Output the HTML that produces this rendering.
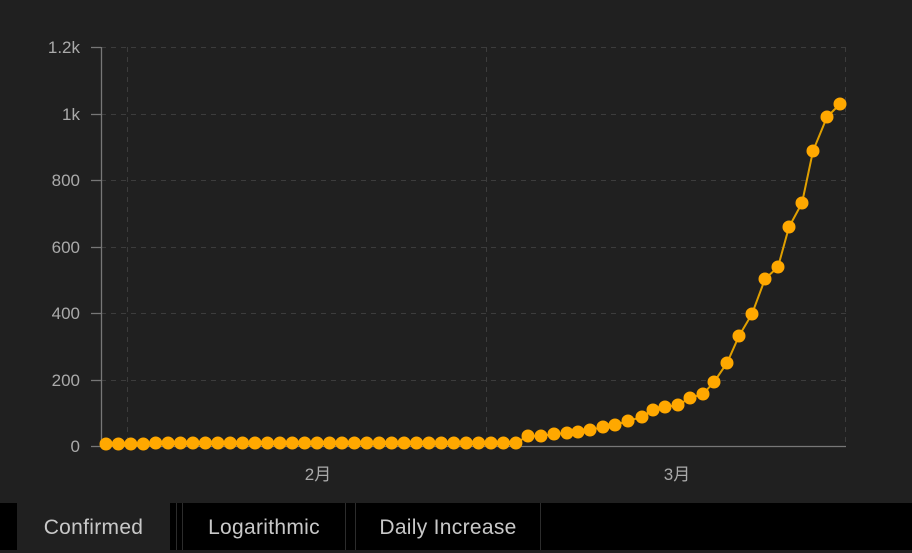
<!DOCTYPE html>
<html><head><meta charset="utf-8"><style>
html,body{margin:0;padding:0;width:912px;height:550px;overflow:hidden;background:#202020;font-family:"Liberation Sans","Noto Sans CJK SC",sans-serif}
.tabs{position:absolute;left:0;top:503px;width:912px;height:47px;background:#000}
.tab{position:absolute;top:0;height:47px;line-height:50px;color:#c8c8c8;font-size:21px;letter-spacing:0.3px;text-align:center}
.sep{position:absolute;top:0;width:1px;height:47px;background:#2c2c2c}
</style></head><body>
<svg width="912" height="503" style="position:absolute;left:0;top:0" font-family="Liberation Sans, Noto Sans CJK SC, sans-serif">
<g stroke="#3c3c3c" stroke-width="1" stroke-dasharray="5,5">
<line x1="101" y1="47.5" x2="846" y2="47.5"/><line x1="101" y1="114.5" x2="846" y2="114.5"/><line x1="101" y1="180.5" x2="846" y2="180.5"/><line x1="101" y1="247.5" x2="846" y2="247.5"/><line x1="101" y1="313.5" x2="846" y2="313.5"/><line x1="101" y1="380.5" x2="846" y2="380.5"/>
<line x1="127.5" y1="47" x2="127.5" y2="446"/><line x1="486.5" y1="47" x2="486.5" y2="446"/><line x1="845.5" y1="47" x2="845.5" y2="446"/>
</g>
<g stroke="#777" stroke-width="1.3">
<line x1="101.5" y1="47" x2="101.5" y2="446"/><line x1="101" y1="446.5" x2="846" y2="446.5"/>
<line x1="91" y1="47.5" x2="101" y2="47.5"/><line x1="91" y1="114.5" x2="101" y2="114.5"/><line x1="91" y1="180.5" x2="101" y2="180.5"/><line x1="91" y1="247.5" x2="101" y2="247.5"/><line x1="91" y1="313.5" x2="101" y2="313.5"/><line x1="91" y1="380.5" x2="101" y2="380.5"/><line x1="91" y1="446.5" x2="101" y2="446.5"/>
</g>
<g fill="#aaa" font-size="17" text-anchor="end">
<text x="80" y="53">1.2k</text><text x="80" y="120">1k</text><text x="80" y="186">800</text><text x="80" y="253">600</text><text x="80" y="319">400</text><text x="80" y="386">200</text><text x="80" y="452">0</text>
</g>
<g fill="#aaa" font-size="17" text-anchor="middle"><text x="318" y="480">2月</text><text x="677" y="480">3月</text></g>
<polyline fill="none" stroke="#e0a000" stroke-width="2" points="106,444 118.4,444 130.8,444 143.3,444 155.7,443 515.9,443 528,436 541,436 554,434 567,433 578,432 590,430 603,427 615,425 628,421 642,417 653,410 665,407 678,405 690,398 703,394 714,382 727,363 739,336 752,314 765,279 778,267 789,227 802,203 813,151 827,117 840,104"/>
<path fill="none" stroke="#ffa800" stroke-width="13" stroke-linecap="round" d="M106 444h0M118.4 444h0M130.8 444h0M143.3 444h0M155.7 443h0M168.1 443h0M180.5 443h0M192.9 443h0M205.4 443h0M217.8 443h0M230.2 443h0M242.6 443h0M255 443h0M267.5 443h0M279.9 443h0M292.3 443h0M304.7 443h0M317.1 443h0M329.6 443h0M342 443h0M354.4 443h0M366.8 443h0M379.2 443h0M391.7 443h0M404.1 443h0M416.5 443h0M428.9 443h0M441.3 443h0M453.8 443h0M466.2 443h0M478.6 443h0M491 443h0M503.4 443h0M515.9 443h0M528 436h0M541 436h0M554 434h0M567 433h0M578 432h0M590 430h0M603 427h0M615 425h0M628 421h0M642 417h0M653 410h0M665 407h0M678 405h0M690 398h0M703 394h0M714 382h0M727 363h0M739 336h0M752 314h0M765 279h0M778 267h0M789 227h0M802 203h0M813 151h0M827 117h0M840 104h0"/>
</svg>
<div class="tabs">
<div class="tab" style="left:17px;width:153px;background:#202020">Confirmed</div>
<div class="sep" style="left:176px"></div><div class="sep" style="left:182px"></div>
<div class="tab" style="left:183px;width:162px">Logarithmic</div>
<div class="sep" style="left:345px"></div><div class="sep" style="left:355px"></div>
<div class="tab" style="left:356px;width:184px">Daily Increase</div>
<div class="sep" style="left:540px"></div>
</div>
</body></html>
